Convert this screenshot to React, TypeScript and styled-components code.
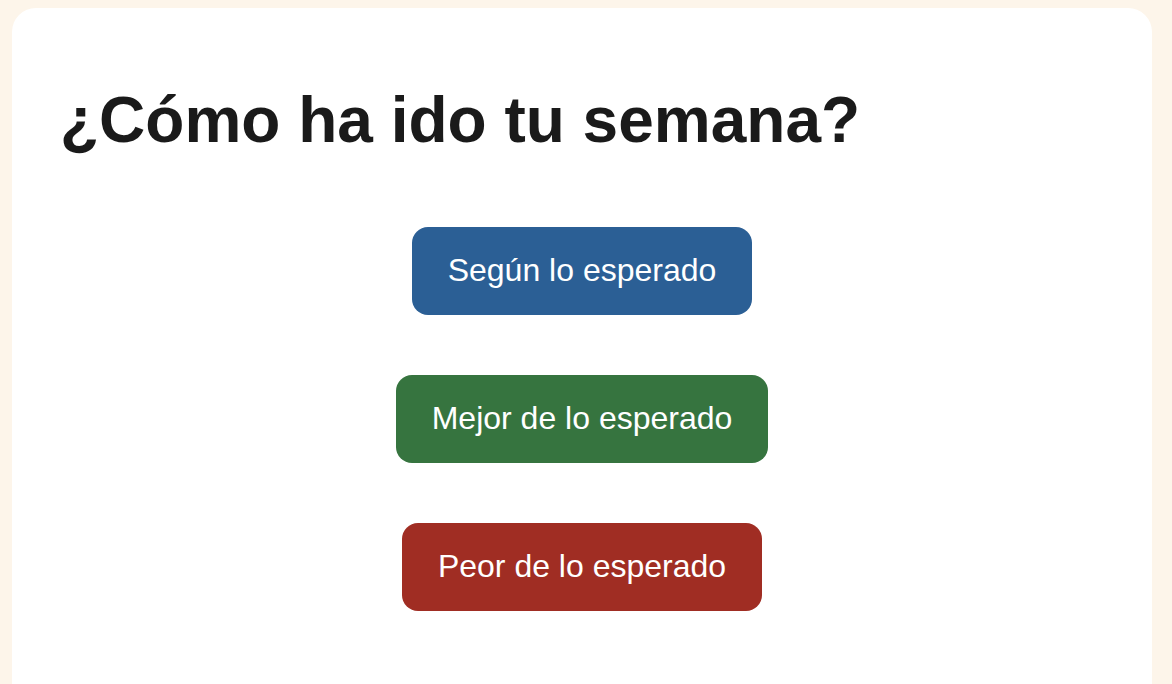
import { createGlobalStyle, styled } from 'styled-components'

/* ----------------------
   Global
---------------------- */

const GlobalStyle = createGlobalStyle`
  html, body {
    margin: 0;
    padding: 0;
    background-color: #fdf5ea;
    font-family: 'Liberation Sans', Arial, sans-serif;
  }
`

/* ----------------------
   Styled Components
---------------------- */

const Page = styled.div`
  padding: 8px 20px 0 12px;
  height: 684px;
  box-sizing: border-box;
  overflow: hidden;
`

const Card = styled.div`
  background-color: #ffffff;
  border-radius: 24px;
  padding: 48px 48px 80px;
  min-height: 760px;
  box-sizing: border-box;
  display: flex;
  flex-direction: column;
`

const Title = styled.h1`
  margin: 28px 0 0;
  font-size: 64px;
  font-weight: 700;
  line-height: 1.15;
  color: #1a1a1a;
`

const Choices = styled.div`
  display: flex;
  flex-direction: column;
  align-items: center;
  gap: 60px;
  margin-top: 69px;
`

const ChoiceButton = styled.button<{ $tone: 'blue' | 'green' | 'red' }>`
  border: none;
  border-radius: 16px;
  padding: 0 36px;
  height: 88px;
  font-family: 'Liberation Sans', Arial, sans-serif;
  font-size: 32px;
  color: #ffffff;
  cursor: pointer;
  background-color: ${({ $tone }) =>
    $tone === 'blue' ? '#2b5f95' : $tone === 'green' ? '#36743f' : '#a02d23'};
`

/* ----------------------
   Component
---------------------- */

const options: { label: string; tone: 'blue' | 'green' | 'red' }[] = [
  { label: 'Según lo esperado', tone: 'blue' },
  { label: 'Mejor de lo esperado', tone: 'green' },
  { label: 'Peor de lo esperado', tone: 'red' },
]

export default function App() {
  return (
    <>
      <GlobalStyle />
      <Page>
        <Card>
          <Title>¿Cómo ha ido tu semana?</Title>
          <Choices>
            {options.map((o) => (
              <ChoiceButton key={o.label} $tone={o.tone}>
                {o.label}
              </ChoiceButton>
            ))}
          </Choices>
        </Card>
      </Page>
    </>
  )
}
